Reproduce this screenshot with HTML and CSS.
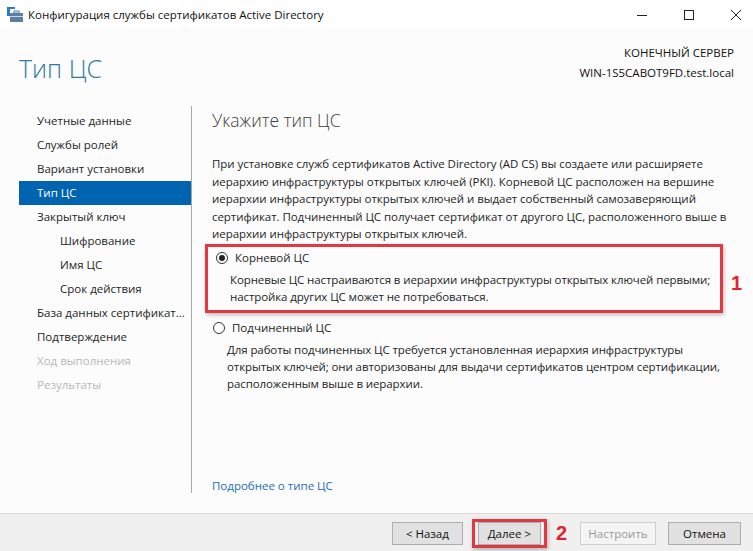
FILE: index.html
```html
<!DOCTYPE html>
<html lang="ru">
<head>
  <meta charset="UTF-8" />
  <title>Конфигурация службы сертификатов Active Directory</title>
  <link rel="stylesheet" href="styles.css">
</head>
<body>
  <div class="window">
    <div class="titlebar">
      <svg class="app-icon" width="16" height="16" viewBox="0 0 16 16">
        <rect x="0" y="0" width="3" height="9" fill="#2a7bc4"/>
        <rect x="3" y="0" width="5" height="2" fill="#2a7bc4"/>
        <rect x="3" y="6" width="13" height="9" fill="#5b7fa3"/>
        <rect x="7" y="4" width="5" height="2" fill="none" stroke="#5b7fa3" stroke-width="1"/>
        <rect x="3" y="9" width="13" height="1" fill="#c9d7e6"/>
      </svg>
      <span class="title">Конфигурация службы сертификатов Active Directory</span>
      <div class="controls">
        <svg width="12" height="12" viewBox="0 0 12 12"><path d="M1 6.5h10" stroke="#222" stroke-width="1"/></svg>
        <svg width="12" height="12" viewBox="0 0 12 12"><rect x="1.5" y="1.5" width="9" height="9" fill="none" stroke="#222" stroke-width="1"/></svg>
        <svg width="12" height="12" viewBox="0 0 12 12"><path d="M1 1l10 10M11 1L1 11" stroke="#222" stroke-width="1"/></svg>
      </div>
    </div>

    <div class="main">
      <div class="header">
        <h1>Тип ЦС</h1>
        <div class="server">
          <div>КОНЕЧНЫЙ СЕРВЕР</div>
          <div>WIN-1S5CABOT9FD.test.local</div>
        </div>
      </div>

      <div class="body">
        <ul class="nav">
          <li>Учетные данные</li>
          <li>Службы ролей</li>
          <li>Вариант установки</li>
          <li class="active">Тип ЦС</li>
          <li>Закрытый ключ</li>
          <li class="sub">Шифрование</li>
          <li class="sub">Имя ЦС</li>
          <li class="sub">Срок действия</li>
          <li>База данных сертификат...</li>
          <li>Подтверждение</li>
          <li class="off">Ход выполнения</li>
          <li class="off">Результаты</li>
        </ul>

        <div class="content">
          <h2>Укажите тип ЦС</h2>
          <p class="intro">При установке служб сертификатов Active Directory (AD CS) вы создаете или расширяете иерархию инфраструктуры открытых ключей (PKI). Корневой ЦС расположен на вершине иерархии инфраструктуры открытых ключей и выдает собственный самозаверяющий сертификат. Подчиненный ЦС получает сертификат от другого ЦС, расположенного выше в иерархии инфраструктуры открытых ключей.</p>

          <div class="option marked">
            <label><span class="radio checked"></span>Корневой ЦС</label>
            <p>Корневые ЦС настраиваются в иерархии инфраструктуры открытых ключей первыми; настройка других ЦС может не потребоваться.</p>
            <span class="num num1">1</span>
          </div>

          <div class="option">
            <label><span class="radio"></span>Подчиненный ЦС</label>
            <p>Для работы подчиненных ЦС требуется установленная иерархия инфраструктуры открытых ключей; они авторизованы для выдачи сертификатов центром сертификации, расположенным выше в иерархии.</p>
          </div>

          <a class="more" href="#">Подробнее о типе ЦС</a>
        </div>
      </div>
    </div>

    <div class="footer">
      <button class="btn back">&lt; Назад</button>
      <span class="mark"><button class="btn">Далее &gt;</button></span>
      <span class="num num2">2</span>
      <button class="btn setup" disabled>Настроить</button>
      <button class="btn">Отмена</button>
    </div>
  </div>
</body>
</html>
```

FILE: styles.css
```css
* {
  margin: 0;
  padding: 0;
  box-sizing: border-box;
}
body {
  font-family: 'Open Sans', 'Noto Sans', sans-serif;
  font-size: 11.5px;
  color: #1e1e1e;
  width: 753px;
  height: 551px;
  overflow: hidden;
}
.window {
  display: flex;
  flex-direction: column;
  height: 551px;
  background: #fcfcfc;
}
.titlebar {
  height: 28px;
  background: #fff;
  display: flex;
  align-items: center;
  padding-left: 7px;
}
.app-icon {
  margin-right: 5px;
  margin-top: 1px;
}
.title {
  font-size: 11.5px;
  color: #111;
}
.controls {
  margin-left: auto;
  display: flex;
  gap: 35px;
  padding-right: 11px;
  margin-top: 2px;
}
.main {
  flex: 1;
  display: flex;
  flex-direction: column;
}
.header {
  height: 78px;
  display: flex;
  justify-content: space-between;
  padding: 12px 19px 0 19px;
}
h1 {
  font-weight: 300;
  font-size: 25px;
  color: #2f7aa5;
  margin-top: 11px;
}
.server {
  text-align: right;
  line-height: 20px;
  margin-top: 3px;
  color: #111;
}
.body {
  flex: 1;
  display: flex;
  padding-bottom: 20px;
}
.nav {
  list-style: none;
  width: 192px;
  padding: 3px 0 0 19px;
  border-right: 1px solid #a8a8a8;
}
.nav li {
  height: 24px;
  line-height: 24px;
  padding-left: 18px;
  white-space: nowrap;
}
.nav li.sub {
  padding-left: 41px;
}
.nav li.active {
  background: #0064b0;
  color: #fff;
}
.nav li.off {
  color: #b8b8b8;
}
.content {
  flex: 1;
  display: flex;
  flex-direction: column;
  padding: 0 0 0 20px;
  position: relative;
}
h2 {
  font-weight: 300;
  font-size: 17.5px;
  color: #3c3c3c;
  margin-top: 1px;
  line-height: 26px;
}
.intro {
  margin-top: 22px;
  line-height: 17.5px;
  width: 522px;
  letter-spacing: -0.05px;
}
.option {
  position: relative;
}
.option label {
  display: flex;
  align-items: center;
  height: 20px;
}
.option p {
  padding-left: 15px;
  line-height: 17px;
  width: 525px;
  margin-top: 3px;
  letter-spacing: -0.1px;
}
.option.marked {
  margin-top: 1px;
  margin-left: -7px;
  width: 518px;
  padding: 1px 0 5px 7px;
  border: 3px solid #e2383f;
  box-shadow: 1px 2px 4px rgba(0, 0, 0, 0.25);
}
.option.marked p {
  width: 500px;
}
.option.marked + .option {
  margin-top: 5px;
}
.radio {
  width: 12px;
  height: 12px;
  border: 1px solid #333;
  border-radius: 50%;
  margin-right: 7px;
  margin-left: 1px;
  background: #fff;
  position: relative;
}
.radio.checked::after {
  content: "";
  position: absolute;
  left: 2px;
  top: 2px;
  width: 6px;
  height: 6px;
  border-radius: 50%;
  background: #222;
}
.num {
  color: #e0242c;
  font-family: 'Liberation Sans', Arial, sans-serif;
  font-weight: bold;
  font-size: 20px;
}
.num1 {
  position: absolute;
  right: -22px;
  top: 25px;
}
.more {
  margin-top: auto;
  color: #1d6db5;
  text-decoration: none;
}
.footer {
  height: 38px;
  background: #f0f0f0;
  border-top: 1px solid #d9d9d9;
  display: flex;
  align-items: center;
  justify-content: flex-end;
  padding: 1px 12px 0 0;
}
.btn {
  font-family: inherit;
  font-size: 11.5px;
  width: 73px;
  height: 23px;
  background: #e1e1e1;
  border: 1px solid #adadad;
  color: #111;
  margin-left: 12px;
}
.btn.back {
  width: 71px;
}
.btn.setup {
  width: 76px;
  margin-left: 13px;
}
.btn:disabled {
  background: #f4f4f4;
  border-color: #cfcfcf;
  color: #9a9a9a;
}
.mark {
  margin-left: 9px;
  width: 75px;
  border: 3px solid #e2383f;
  padding: 0 3px;
  box-shadow: 1px 2px 4px rgba(0, 0, 0, 0.25);
  display: flex;
}
.mark .btn {
  margin-left: 0;
  width: 63px;
}
.num2 {
  margin-left: 9px;
}
```
